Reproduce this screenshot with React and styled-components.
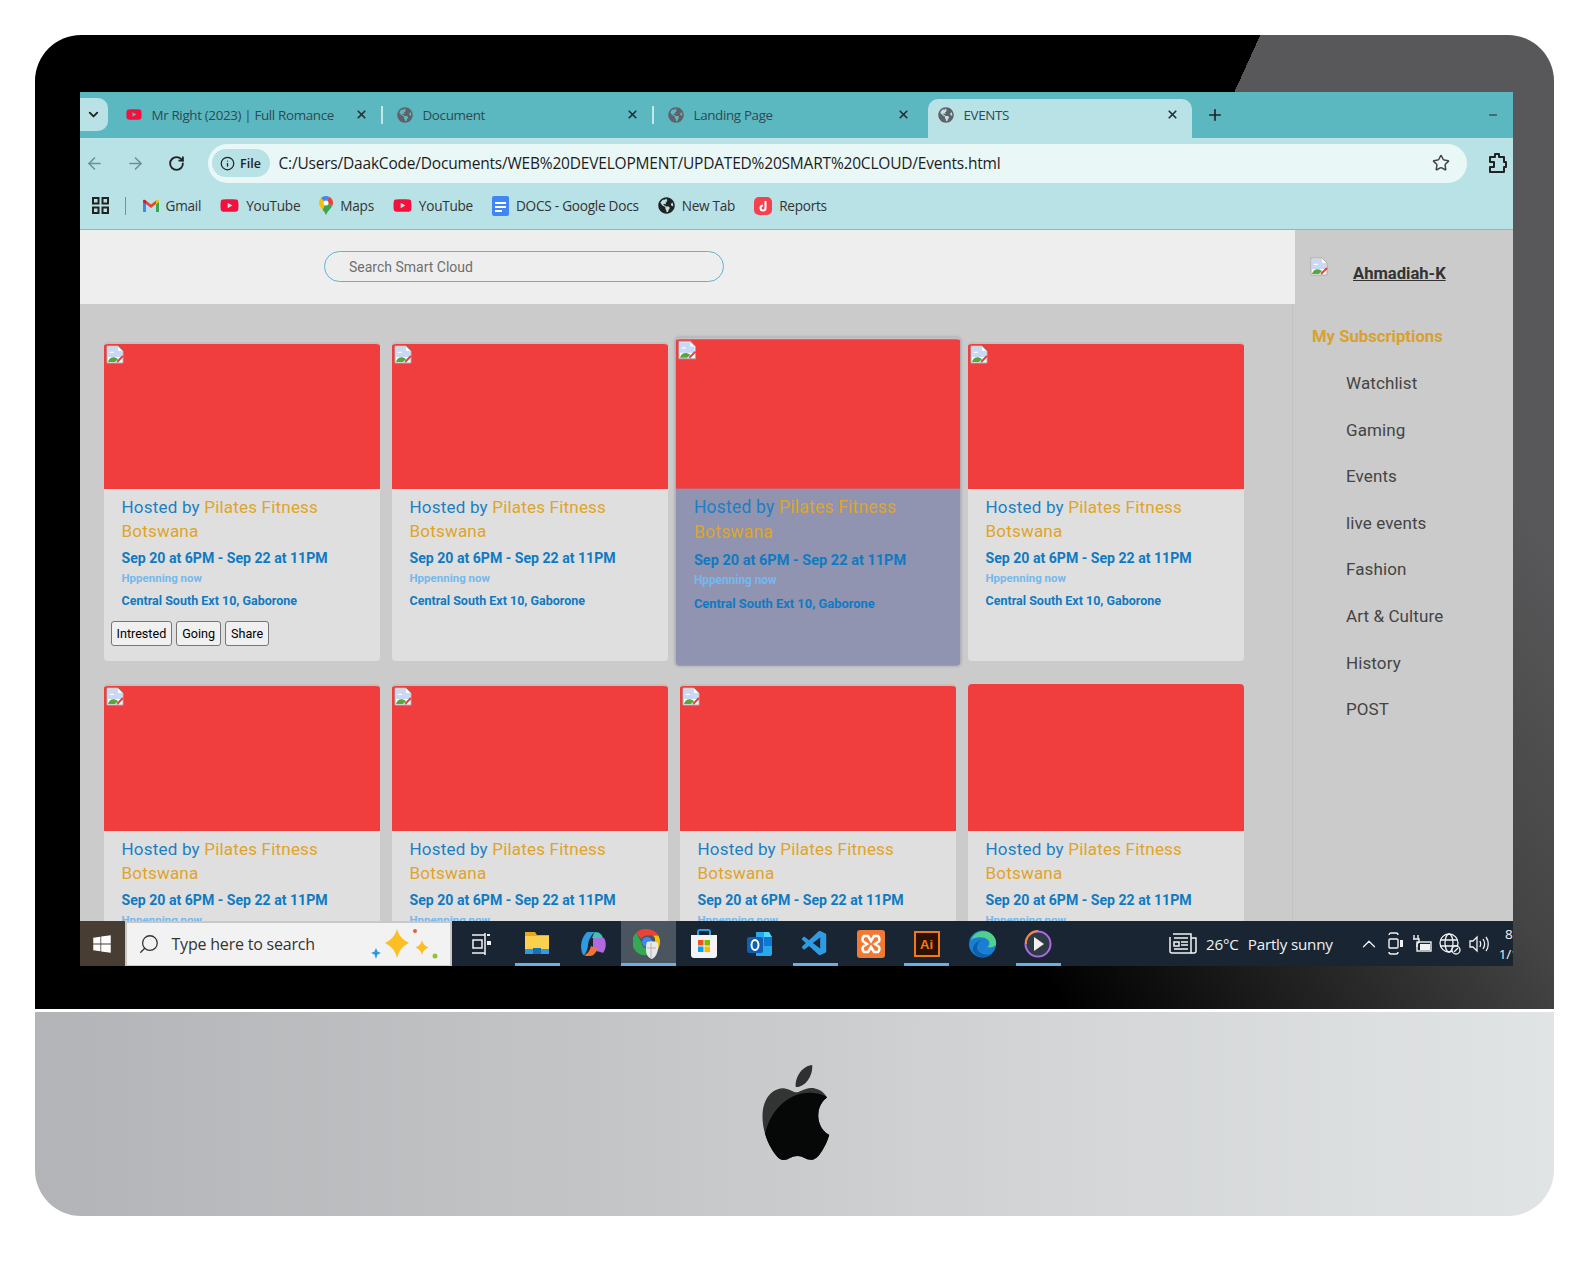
import React from "react";
import styled, { createGlobalStyle } from "styled-components";
import { FaYoutube, FaGlobeAmericas, FaWindows } from "react-icons/fa";
import { VscVscode } from "react-icons/vsc";
import {
  ArrowLeft,
  ArrowRight,
  RotateCw,
  Info,
  Star,
  ChevronDown,
  ChevronUp,
  X,
  Plus,
  Minus,
  Search
} from "lucide-react";

const chromeFont = `"Open Sans", "Noto Sans", sans-serif`;
const siteFont = `"Roboto", "Liberation Sans", sans-serif`;

const GlobalStyle = createGlobalStyle`
  html, body {
    margin: 0;
    padding: 0;
    background: #fff;
  }
  * { box-sizing: border-box; }
`;

const Page = styled.div`
  width: 1589px;
  height: 1276px;
  padding: 35px 35px 0 35px;
  background: #fff;
`;

const Bezel = styled.div`
  width: 1519px;
  height: 974px;
  padding: 57px 41px 43px 44.5px;
  border-radius: 46px 46px 0 0;
  background:
    linear-gradient(114.5deg, #000 1115px, transparent 1115px),
    linear-gradient(55deg, #000 843px, #454545 1274px, #58585a 1508px);
`;

const Chin = styled.div`
  width: 1519px;
  height: 204px;
  margin-top: 3px;
  display: flex;
  justify-content: center;
  padding-top: 53px;
  border-radius: 0 0 46px 46px;
  background: linear-gradient(90deg, #b3b4b7 0%, #c4c6c8 40%, #d2d4d5 65%, #e1e4e4 100%);
`;

const Screen = styled.div`
  width: 100%;
  height: 874px;
  display: flex;
  flex-direction: column;
  overflow: hidden;
`;

const TabStrip = styled.div`
  height: 46px;
  flex: none;
  display: flex;
  align-items: flex-end;
  background: #5bb8c1;
  font-family: ${chromeFont};
`;

const TabMenu = styled.div`
  width: 28px;
  height: 33px;
  margin-bottom: 7px;
  margin-right: 4px;
  border-radius: 0 10px 10px 0;
  background: #b8e2e5;
  color: #222;
  display: flex;
  align-items: center;
  justify-content: center;
`;

const Tab = styled.div`
  width: ${p => (p.$active ? "264px" : "271px")};
  height: 39px;
  margin-left: ${p => (p.$active ? "3px" : "0")};
  display: flex;
  align-items: center;
  padding: ${p => (p.$active ? "0 13px 8px 10px" : "0 15px 8px 14px")};
  gap: 10px;
  border-radius: 10px 10px 0 0;
  background: ${p => (p.$active ? "#b8e2e5" : "transparent")};
  color: #2f4a50;
  font-size: 13.4px;
  letter-spacing: -0.35px;
  white-space: nowrap;
  position: relative;

  &::after {
    content: "";
    display: ${p => (p.$divider ? "block" : "none")};
    position: absolute;
    right: 0;
    top: 7px;
    width: 2px;
    height: 18px;
    background: #c3e6e8;
  }
`;

const TabIcon = styled.div`
  width: 16px;
  flex: none;
  display: flex;
  justify-content: center;
`;

const TabTitle = styled.span`
  flex: 1;
  overflow: hidden;
`;

const NewTab = styled.div`
  margin: 0 auto 14px 14px;
  color: #222;
  display: flex;
`;

const WindowButton = styled.div`
  margin: 0 14px 17px 0;
  color: #222;
  display: flex;
`;

const Toolbar = styled.div`
  height: 50px;
  flex: none;
  display: flex;
  align-items: center;
  background: #b8e2e5;
`;

const NavButton = styled.div`
  width: 30px;
  margin-right: 11px;
  display: flex;
  justify-content: center;
  color: ${p => (p.$dim ? "#6f8f94" : "#222")};
`;

const Address = styled.div`
  width: 1259px;
  height: 39px;
  margin-left: 5px;
  margin-right: 21px;
  flex: none;
  display: flex;
  align-items: center;
  padding: 0 17px 0 4px;
  border-radius: 20px;
  background: #e9f7f7;
  font-family: ${chromeFont};
`;

const FileChip = styled.div`
  width: 58px;
  height: 28px;
  flex: none;
  display: flex;
  align-items: center;
  justify-content: center;
  gap: 5px;
  border-radius: 14px;
  background: #b8e2e5;
  color: #222;
  font-size: 12.5px;
  font-weight: 600;
`;

const Url = styled.div`
  flex: 1;
  margin-left: 9px;
  color: #1c1c1c;
  font-size: 15.5px;
  letter-spacing: -0.2px;
  white-space: nowrap;
`;

const Bookmarks = styled.div`
  height: 42px;
  flex: none;
  display: flex;
  align-items: center;
  padding: 0 0 6px 12px;
  background: #b8e2e5;
  border-bottom: 1px solid #94b5b8;
  font-family: ${chromeFont};
`;

const BookmarkRule = styled.div`
  width: 1px;
  height: 18px;
  margin: 0 17px 0 16px;
  background: #5d9aa1;
`;

const Bookmark = styled.div`
  display: flex;
  align-items: center;
  gap: 7px;
  margin-right: 19px;
  color: #333;
  font-size: 13.6px;
  letter-spacing: -0.25px;
  white-space: nowrap;
`;

const Content = styled.div`
  flex: 1;
  min-height: 0;
  display: flex;
  overflow: hidden;
  background: #cbcbcb;
  font-family: ${siteFont};
`;

const Main = styled.div`
  width: 1213.5px;
  flex: none;
  display: flex;
  flex-direction: column;
  position: relative;
  z-index: 1;
  border-right: 1px solid #c2c2c2;
`;

const SearchHeader = styled.div`
  height: 74px;
  flex: none;
  margin-right: -3px;
  padding: 21px 0 0 244.5px;
  background: #eeeeee;
`;

const SearchInput = styled.div`
  width: 400px;
  height: 31px;
  display: flex;
  align-items: center;
  padding-left: 24px;
  border: 1px solid #5cb6d2;
  border-radius: 16px;
  color: #6f6f6f;
  font-size: 14px;
`;

const CardGrid = styled.div`
  flex: 1;
  min-height: 0;
  display: grid;
  grid-template-columns: repeat(4, 276px);
  grid-auto-rows: 319px;
  column-gap: 12px;
  row-gap: 23px;
  padding: 38px 0 0 24.5px;
`;

const Card = styled.div`
  position: relative;
  border-radius: 4px;
  border-top: ${p => (p.$flush ? "none" : "2px solid #c3c0c0")};
  background: ${p => (p.$hover ? "#9094b0" : "#dfdfdf")};
  transform: ${p => (p.$hover ? "scale(1.03)" : "none")};
  box-shadow: ${p => (p.$hover ? "0 0 2px 1px #b5b5bb" : "none")};
  overflow: hidden;
`;

const CardImage = styled.div`
  height: ${p => (p.$flush ? "147px" : "145px")};
  background: #f03e3e;
  padding: 1px 0 0 2px;
`;

const CardBody = styled.div`
  padding: 6px 10px 0 17.5px;
`;

const Title = styled.div`
  color: #1a7fc4;
  font-size: 17px;
  line-height: 24px;
  letter-spacing: 0.2px;
`;

const Host = styled.span`
  color: #dfa42a;
`;

const DateLine = styled.div`
  margin-top: 5px;
  color: #0f7ac2;
  font-size: 14.1px;
  font-weight: 700;
  line-height: 20px;
`;

const Status = styled.div`
  margin-top: 2px;
  color: #74b8ee;
  font-size: 11.5px;
  font-weight: 700;
  line-height: 16px;
`;

const Location = styled.div`
  margin-top: 6px;
  color: #0f7ac2;
  font-size: 12.5px;
  font-weight: 700;
  line-height: 18px;
`;

const Actions = styled.div`
  display: flex;
  gap: 4px;
  margin: 11px 0 0 -11px;
`;

const ActionButton = styled.div`
  height: 25px;
  padding: 0 5px;
  display: flex;
  align-items: center;
  border: 1px solid #767676;
  border-radius: 3px;
  background: #f0f0f0;
  color: #000;
  font-size: 12.6px;
`;

const Sidebar = styled.div`
  flex: 1;
  padding: 26px 0 0 19px;
`;

const Profile = styled.div`
  display: flex;
  align-items: center;
  height: 34px;
  gap: 25px;
  margin-bottom: 35px;
  color: #333;
  font-size: 16.6px;
  font-weight: 700;
  text-decoration: underline;
`;

const ProfilePhoto = styled.div`
  display: flex;
  margin: -14px 0 0 -2px;
`;

const SideHeading = styled.div`
  height: 24px;
  line-height: 24px;
  margin-bottom: 11px;
  color: #d9a12e;
  font-size: 16.7px;
  font-weight: 700;
`;

const SideLink = styled.div`
  height: 46.6px;
  line-height: 46.6px;
  padding-left: 34px;
  color: #444;
  font-size: 17px;
  letter-spacing: 0.1px;
`;

const Taskbar = styled.div`
  height: 45px;
  flex: none;
  display: flex;
  align-items: stretch;
  background: #1a2534;
  font-family: ${chromeFont};
  color: #f2f2f2;
  white-space: nowrap;
`;

const StartButton = styled.div`
  width: 45px;
  flex: none;
  display: flex;
  align-items: center;
  justify-content: center;
  background: #473d33;
  color: #fff;
`;

const TaskSearch = styled.div`
  width: 327px;
  flex: none;
  display: flex;
  align-items: center;
  padding-left: 11px;
  gap: 12px;
  border: 2px solid #c8c8c8;
  border-bottom-width: 1px;
  background: #f2f2f2;
  color: #333;
  font-size: 16px;
  letter-spacing: -0.2px;
`;

const SearchGlass = styled(Search)`
  transform: scaleX(-1);
`;

const Sparkle = styled.div`
  margin-left: auto;
  margin-right: 10px;
  display: flex;
`;

const TaskApps = styled.div`
  display: flex;
  margin-left: 2px;
`;

const TaskApp = styled.div`
  width: 55.7px;
  display: flex;
  align-items: center;
  justify-content: center;
  background-color: ${p => (p.$focus ? "#4a5560" : "transparent")};
  background-image: ${p => (p.$open ? "linear-gradient(#6ab0e0, #6ab0e0)" : "none")};
  background-repeat: no-repeat;
  background-position: center bottom;
  background-size: ${p => (p.$focus ? "100%" : "45px")} 3px;
`;

const Tray = styled.div`
  display: flex;
  align-items: center;
  margin-left: 103px;
  font-size: 15.2px;
  letter-spacing: -0.2px;
`;

const Weather = styled.span`
  margin: 0 9px 0 9px;
`;

const TrayIcons = styled.div`
  display: flex;
  align-items: center;
  gap: 7.5px;
  margin-left: 25px;
`;

const Clock = styled.div`
  margin-left: 10px;
  font-size: 13.5px;
  line-height: 20px;
  text-align: center;
`;

const BrokenImage = () => (
  <svg width="18" height="19" viewBox="0 0 18 19">
    <path d="M1 1h11l5 5v12H1z" fill="#fff" stroke="#a8a8a8" />
    <path d="M2 2h10v4h4v6H2z" fill="#c9d8f5" />
    <path d="M3 8c2-2 4-2 5 0h-5z" fill="#fff" />
    <path d="M2 17c1-5 6-6 10-3l-3 3z" fill="#5aa63c" />
    <path d="M11 17l6-6" stroke="#f03e3e" strokeWidth="2" />
  </svg>
);

const GmailIcon = () => (
  <svg width="16" height="13" viewBox="0 0 16 13">
    <path d="M0 2v10c0 .6.4 1 1 1h2V5z" fill="#4285f4" />
    <path d="M16 2v10c0 .6-.4 1-1 1h-2V5z" fill="#34a853" />
    <path d="M13 1.500v3.700l3-2.200V2c0-1.300-1.700-1.900-3-.5z" fill="#fbbc04" />
    <path d="M3 5V1.500L8 5.500l5-4V5L8 9z" fill="#ea4335" />
    <path d="M0 2v1l3 2.200V1.500C1.700.2 0 .7 0 2z" fill="#c5221f" />
  </svg>
);

const MapsIcon = () => (
  <svg width="14" height="19" viewBox="0 0 14 19">
    <path d="M7 19C5 14 0 11 0 7a7 7 0 0 1 2-5l5 5z" fill="#fbbc04" />
    <path d="M2 2a7 7 0 0 1 5-2 7 7 0 0 1 3 .7L7 7z" fill="#4285f4" />
    <path d="M10 .7A7 7 0 0 1 14 7c0 1-.3 2-.7 2.800L7 7z" fill="#ea4335" />
    <path d="M13.300 9.800C11.800 13 8.500 15 7 19c-.8-2-2-3.600-3.300-5.200L7 7z" fill="#34a853" />
    <circle cx="7" cy="7" r="2.500" fill="#fff" />
  </svg>
);

const DocsIcon = () => (
  <svg width="17" height="20" viewBox="0 0 17 20">
    <rect width="17" height="20" rx="2" fill="#4285f4" />
    <path d="M3 6h11v2H3zM3 10h11v2H3zM3 14h7v2H3z" fill="#fff" />
  </svg>
);

const ReportsIcon = () => (
  <svg width="18" height="18" viewBox="0 0 18 18">
    <rect width="18" height="18" rx="5" fill="#f4404f" />
    <path d="M11.500 4v7a2.500 2.500 0 1 1-2.500-2.500" fill="none" stroke="#fff" strokeWidth="2" />
  </svg>
);

const AppsIcon = () => (
  <svg width="17" height="17" viewBox="0 0 17 17" fill="none" stroke="#222" strokeWidth="2">
    <rect x="1" y="1" width="5.500" height="5.500" />
    <rect x="10.500" y="1" width="5.500" height="5.500" />
    <rect x="1" y="10.500" width="5.500" height="5.500" />
    <rect x="10.500" y="10.500" width="5.500" height="5.500" />
  </svg>
);

const ExtensionIcon = () => (
  <svg width="20" height="22" viewBox="0 0 20 22" fill="none" stroke="#222" strokeWidth="2" strokeLinejoin="round">
    <path d="M2 5h5V2h4v3h5v5h2v5h-2v5H2v-5h4v-5H2z" />
  </svg>
);

const SparkleIcon = () => (
  <svg width="70" height="34" viewBox="0 0 70 34">
    <path d="M6 21l1.500 3.500L11 26l-3.500 1.500L6 32l-1.500-4.500L1 26l3.500-1.500z" fill="#2a9ae0" />
    <path d="M27 2c2 7 6 11 12 14-6 3-10 7-12 15-2-8-6-12-12-15 6-3 10-7 12-14z" fill="#fbbf24" />
    <path d="M52 13c1 4 3 6 6.500 7.500-3.500 1.500-5.500 3.500-6.500 7.500-1-4-3-6-6.500-7.500 3.500-1.500 5.500-3.500 6.500-7.500z" fill="#fbbf24" />
    <circle cx="45" cy="4" r="2" fill="#e0603a" />
    <circle cx="65" cy="29" r="2.500" fill="#8cc63f" />
  </svg>
);

const TaskViewIcon = () => (
  <svg width="20" height="24" viewBox="0 0 20 24" fill="none" stroke="#f2f2f2" strokeWidth="1.500">
    <path d="M1 3h13M1 21h13M14 1v22" />
    <rect x="2" y="8" width="9" height="8" />
    <rect x="16" y="9" width="4" height="4" fill="#f2f2f2" stroke="none" />
    <rect x="16" y="2" width="3" height="2" fill="#f2f2f2" stroke="none" />
  </svg>
);

const FolderIcon = () => (
  <svg width="26" height="25" viewBox="0 0 26 25">
    <path d="M1 1h10l2 3h12v3H1z" fill="#e8a91f" />
    <rect x="1" y="5" width="24" height="18" fill="#fbd04e" />
    <path d="M1 18h24v5H1z" fill="#2f9be0" />
    <path d="M9 23v-6h8v6z" fill="#1b6fb5" />
  </svg>
);

const CopilotIcon = () => (
  <svg width="28" height="26" viewBox="0 0 28 26">
    <path d="M8 1h8c-5 4-7 10-7 14-1 4-2 9-5 9-3-6-3-16 4-23z" fill="#2f9be0" />
    <path d="M16 1c5 0 7 3 8 6H13c1-3 2-5 3-6z" fill="#3bc5b0" />
    <path d="M14 7h11c3 5 2 11-1 15-2-1-8-2-10-4z" fill="#b06ae0" />
    <path d="M11 25c-3 0-5 0-6-1 4-1 6-5 7-9l7 3c-3 4-4 7-8 7z" fill="#f4733a" />
  </svg>
);

const ChromeShield = () => (
  <svg width="30" height="31" viewBox="0 0 30 31">
    <path d="M14 1a13 13 0 0 1 11.300 6.500H14a6.500 6.500 0 0 0-5.800 3.500L3 5a13 13 0 0 1 11-4z" fill="#ea4335" />
    <path d="M25.300 7.500A13 13 0 0 1 14.500 27l5.500-10a6.500 6.500 0 0 0 0-9.500z" fill="#fbbc04" />
    <path d="M14.500 27A13 13 0 0 1 3 5l5.500 9a6.500 6.500 0 0 0 7.500 6.500z" fill="#34a853" />
    <circle cx="14" cy="14" r="5" fill="#4285f4" />
    <path d="M14 14c3-1 6-1 9 0 3 0 3 6 1 11-1 3-3 5-5 6-4-1-6-5-6-9 0-3 0-6 1-8z" fill="#e8e8e8" />
    <path d="M18 15v15M14 20h9" stroke="#b5b5b5" strokeWidth="1" />
  </svg>
);

const StoreIcon = () => (
  <svg width="28" height="30" viewBox="0 0 28 30">
    <path d="M8 6V3c0-1 1-2 2-2h8c1 0 2 1 2 2v3" fill="none" stroke="#2f9be0" strokeWidth="2" />
    <path d="M1 6h26v20c0 2-1 3-3 3H4c-2 0-3-1-3-3z" fill="#f4f4f4" />
    <rect x="8" y="11" width="5.500" height="5.500" fill="#f25022" />
    <rect x="14.500" y="11" width="5.500" height="5.500" fill="#7fba00" />
    <rect x="8" y="17.500" width="5.500" height="5.500" fill="#00a4ef" />
    <rect x="14.500" y="17.500" width="5.500" height="5.500" fill="#ffb900" />
  </svg>
);

const OutlookIcon = () => (
  <svg width="28" height="26" viewBox="0 0 28 26">
    <path d="M10 1l8 0 8 5v17c0 1-1 2-2 2H10z" fill="#28a8ea" />
    <path d="M18 1h5l3 5h-8z" fill="#50d9ff" />
    <path d="M18 6h8v9h-8z" fill="#0f78d4" />
    <rect x="1" y="6" width="16" height="16" rx="2" fill="#0f5fb5" />
    <ellipse cx="9" cy="14" rx="3.500" ry="5" fill="none" stroke="#fff" strokeWidth="2" />
  </svg>
);

const XamppIcon = () => (
  <svg width="28" height="28" viewBox="0 0 28 28">
    <rect width="28" height="28" rx="3" fill="#f07a34" />
    <path d="M7 6h4l3 5 3-5h4c2 2 2 5 0 6l-3 2 3 2c2 1 2 4 0 6h-4l-3-5-3 5H7c-2-2-2-5 0-6l3-2-3-2c-2-1-2-4 0-6z" fill="none" stroke="#fff" strokeWidth="2.500" />
  </svg>
);

const IllustratorIcon = () => (
  <svg width="26" height="26" viewBox="0 0 26 26">
    <rect x="1" y="1" width="24" height="24" fill="#2d1204" stroke="#f07a1a" strokeWidth="2" />
    <text x="6" y="18" fill="#f07a1a" fontSize="13" fontFamily="Liberation Sans, sans-serif" fontWeight="700">Ai</text>
  </svg>
);

const EdgeIcon = () => (
  <svg width="29" height="28" viewBox="0 0 29 28">
    <circle cx="14.500" cy="14" r="13.500" fill="#1a7fd4" />
    <path d="M3 10C6 2 14 0 20 2c6 2 9 8 8 13-2 2-5 3-9 2 3-1 3-5 1-7-4-4-13-3-17 0z" fill="#4fd18b" />
    <path d="M9 18c0-5 3-8 7-8-5 0-10 3-11 8-1 4 3 9 10 9 3 0 6-1 8-3-6 2-14-1-14-6z" fill="#0c5fa8" />
  </svg>
);

const PlayerIcon = () => (
  <svg width="28" height="30" viewBox="0 0 28 30">
    <circle cx="14" cy="15" r="12.500" fill="#2e3b47" stroke="#b06ae0" strokeWidth="2" />
    <path d="M2 15a12 12 0 0 1 12-13" fill="none" stroke="#f08a3a" strokeWidth="2" />
    <path d="M10 8l10 7-10 7z" fill="#f2f2f2" />
  </svg>
);

const NewsIcon = () => (
  <svg width="28" height="21" viewBox="0 0 28 21" fill="none" stroke="#f2f2f2" strokeWidth="1.500">
    <path d="M4 1h18v19H3a2 2 0 0 1-2-2V4" />
    <path d="M22 5h5v13a2 2 0 0 1-2 2h-3" />
    <path d="M5 5h14M12 9h7M12 12h7M5 16h14" />
    <rect x="5" y="9" width="5" height="4" />
  </svg>
);

const CameraIcon = () => (
  <svg width="17" height="23" viewBox="0 0 17 23" fill="none" stroke="#f2f2f2" strokeWidth="1.400">
    <path d="M2 3c0-1 1-2 2-2h5c1 0 2 1 2 2M2 20c0 1 1 2 2 2h5c1 0 2-1 2-2" />
    <rect x="2" y="7" width="9" height="9" rx="1" />
    <rect x="13" y="8" width="3" height="7" fill="#f2f2f2" stroke="none" />
  </svg>
);

const PowerIcon = () => (
  <svg width="20" height="18" viewBox="0 0 20 18" fill="none" stroke="#f2f2f2" strokeWidth="1.400">
    <path d="M2 0v4M6 0v4M1 4h6v3l-2 2v3" />
    <rect x="5" y="7" width="14" height="9" />
    <rect x="8" y="9" width="10" height="6" fill="#f2f2f2" stroke="none" />
  </svg>
);

const NetworkIcon = () => (
  <svg width="22" height="22" viewBox="0 0 22 22" fill="none" stroke="#f2f2f2" strokeWidth="1.300">
    <circle cx="10" cy="10" r="9" />
    <ellipse cx="10" cy="10" rx="4" ry="9" />
    <path d="M1.500 7h17M1.500 13h17" />
    <circle cx="17" cy="17" r="4" fill="#1a2534" />
    <path d="M15 19l4-4" />
  </svg>
);

const SpeakerIcon = () => (
  <svg width="20" height="20" viewBox="0 0 20 20" fill="none" stroke="#f2f2f2" strokeWidth="1.300">
    <path d="M1 7h3l4-4v14l-4-4H1z" />
    <path d="M11 7c1 2 1 4 0 6M14 5c2 3 2 7 0 10M17 3c3 4 3 10 0 14" />
  </svg>
);

const AppleLogo = () => (
  <svg width="70" height="95" viewBox="1.500 0 20.500 24" preserveAspectRatio="none">
    <defs>
      <clipPath id="appleBody">
        <path d="M12.152 6.896c-.948 0-2.415-1.078-3.96-1.04-2.04.027-3.91 1.183-4.961 3.014-2.117 3.675-.546 9.103 1.519 12.09 1.013 1.454 2.208 3.09 3.792 3.039 1.52-.065 2.09-.987 3.935-.987 1.831 0 2.35.987 3.96.948 1.637-.026 2.676-1.48 3.676-2.948 1.156-1.688 1.636-3.325 1.662-3.415-.039-.013-3.182-1.221-3.22-4.857-.026-3.04 2.48-4.494 2.597-4.559-1.429-2.09-3.623-2.324-4.39-2.376-2-.156-3.675 1.09-4.61 1.09z" />
      </clipPath>
    </defs>
    <path d="M15.530 3.830c.843-1.012 1.400-2.427 1.245-3.830-1.207.052-2.662.805-3.532 1.818-.780.896-1.454 2.338-1.273 3.714 1.338.104 2.715-.688 3.559-1.701" fill="#2f3030" />
    <g clipPath="url(#appleBody)">
      <rect x="0" y="4" width="24" height="20" fill="#333434" />
      <ellipse cx="16" cy="21" rx="13.500" ry="14" fill="#060707" />
    </g>
  </svg>
);

const tabs = [
  { id: 1, title: "Mr Right (2023) | Full Romance", youtube: true, divider: true },
  { id: 2, title: "Document", divider: true },
  { id: 3, title: "Landing Page" },
  { id: 4, title: "EVENTS", active: true }
];

const bookmarks = [
  { label: "Gmail", icon: <GmailIcon /> },
  { label: "YouTube", icon: <FaYoutube size={19} color="#f40f3c" /> },
  { label: "Maps", icon: <MapsIcon /> },
  { label: "YouTube", icon: <FaYoutube size={19} color="#f40f3c" /> },
  { label: "DOCS - Google Docs", icon: <DocsIcon /> },
  { label: "New Tab", icon: <FaGlobeAmericas size={17} color="#222" /> },
  { label: "Reports", icon: <ReportsIcon /> }
];

const cards = [
  { id: 1, buttons: true },
  { id: 2 },
  { id: 3, hover: true },
  { id: 4 },
  { id: 5 },
  { id: 6 },
  { id: 7 },
  { id: 8, flush: true }
];

const sideLinks = ["Watchlist", "Gaming", "Events", "live events", "Fashion", "Art & Culture", "History", "POST"];

const taskApps = [
  { id: "view", icon: <TaskViewIcon /> },
  { id: "files", icon: <FolderIcon />, open: true },
  { id: "copilot", icon: <CopilotIcon /> },
  { id: "chrome", icon: <ChromeShield />, open: true, focus: true },
  { id: "store", icon: <StoreIcon /> },
  { id: "outlook", icon: <OutlookIcon /> },
  { id: "code", icon: <VscVscode size={30} color="#2f9be0" />, open: true },
  { id: "xampp", icon: <XamppIcon /> },
  { id: "ai", icon: <IllustratorIcon />, open: true },
  { id: "edge", icon: <EdgeIcon /> },
  { id: "player", icon: <PlayerIcon />, open: true }
];

const App = () => (
  <Page>
    <GlobalStyle />
    <Bezel>
      <Screen>
        <TabStrip>
          <TabMenu>
            <ChevronDown size={15} strokeWidth={3} />
          </TabMenu>
          {tabs.map(tab => (
            <Tab key={tab.id} $active={tab.active} $divider={tab.divider}>
              <TabIcon>
                {tab.youtube ? (
                  <FaYoutube size={19} color="#f40f3c" />
                ) : (
                  <FaGlobeAmericas size={16} color="#5f6368" />
                )}
              </TabIcon>
              <TabTitle>{tab.title}</TabTitle>
              <X size={13} strokeWidth={3.2} color="#263238" />
            </Tab>
          ))}
          <NewTab>
            <Plus size={18} strokeWidth={2.2} />
          </NewTab>
          <WindowButton>
            <Minus size={12} />
          </WindowButton>
        </TabStrip>

        <Toolbar>
          <NavButton $dim>
            <ArrowLeft size={19} />
          </NavButton>
          <NavButton $dim>
            <ArrowRight size={19} />
          </NavButton>
          <NavButton>
            <RotateCw size={17} strokeWidth={2.6} />
          </NavButton>
          <Address>
            <FileChip>
              <Info size={15} />
              File
            </FileChip>
            <Url>C:/Users/DaakCode/Documents/WEB%20DEVELOPMENT/UPDATED%20SMART%20CLOUD/Events.html</Url>
            <Star size={18} color="#444" strokeWidth={2} />
          </Address>
          <ExtensionIcon />
        </Toolbar>

        <Bookmarks>
          <AppsIcon />
          <BookmarkRule />
          {bookmarks.map((item, i) => (
            <Bookmark key={i}>
              {item.icon}
              {item.label}
            </Bookmark>
          ))}
        </Bookmarks>

        <Content>
          <Main>
            <SearchHeader>
              <SearchInput>Search Smart Cloud</SearchInput>
            </SearchHeader>
            <CardGrid>
              {cards.map(card => (
                <Card key={card.id} $hover={card.hover} $flush={card.flush}>
                  <CardImage $flush={card.flush}>{!card.flush && <BrokenImage />}</CardImage>
                  <CardBody>
                    <Title>
                      Hosted by <Host>Pilates Fitness Botswana</Host>
                    </Title>
                    <DateLine>Sep 20 at 6PM - Sep 22 at 11PM</DateLine>
                    <Status>Hppenning now</Status>
                    <Location>Central South Ext 10, Gaborone</Location>
                    {card.buttons && (
                      <Actions>
                        <ActionButton>Intrested</ActionButton>
                        <ActionButton>Going</ActionButton>
                        <ActionButton>Share</ActionButton>
                      </Actions>
                    )}
                  </CardBody>
                </Card>
              ))}
            </CardGrid>
          </Main>
          <Sidebar>
            <Profile>
              <ProfilePhoto>
                <BrokenImage />
              </ProfilePhoto>
              Ahmadiah-K
            </Profile>
            <SideHeading>My Subscriptions</SideHeading>
            {sideLinks.map(link => (
              <SideLink key={link}>{link}</SideLink>
            ))}
          </Sidebar>
        </Content>

        <Taskbar>
          <StartButton>
            <FaWindows size={20} />
          </StartButton>
          <TaskSearch>
            <SearchGlass size={22} strokeWidth={1.4} />
            Type here to search
            <Sparkle>
              <SparkleIcon />
            </Sparkle>
          </TaskSearch>
          <TaskApps>
            {taskApps.map(app => (
              <TaskApp key={app.id} $open={app.open} $focus={app.focus}>
                {app.icon}
              </TaskApp>
            ))}
          </TaskApps>
          <Tray>
            <NewsIcon />
            <Weather>26°C</Weather>
            Partly sunny
            <TrayIcons>
              <ChevronUp size={22} strokeWidth={1.4} />
              <CameraIcon />
              <PowerIcon />
              <NetworkIcon />
              <SpeakerIcon />
            </TrayIcons>
            <Clock>
              8:45 AM
              <br />
              1/17/2025
            </Clock>
          </Tray>
        </Taskbar>
      </Screen>
    </Bezel>
    <Chin>
      <AppleLogo />
    </Chin>
  </Page>
);

export default App;
